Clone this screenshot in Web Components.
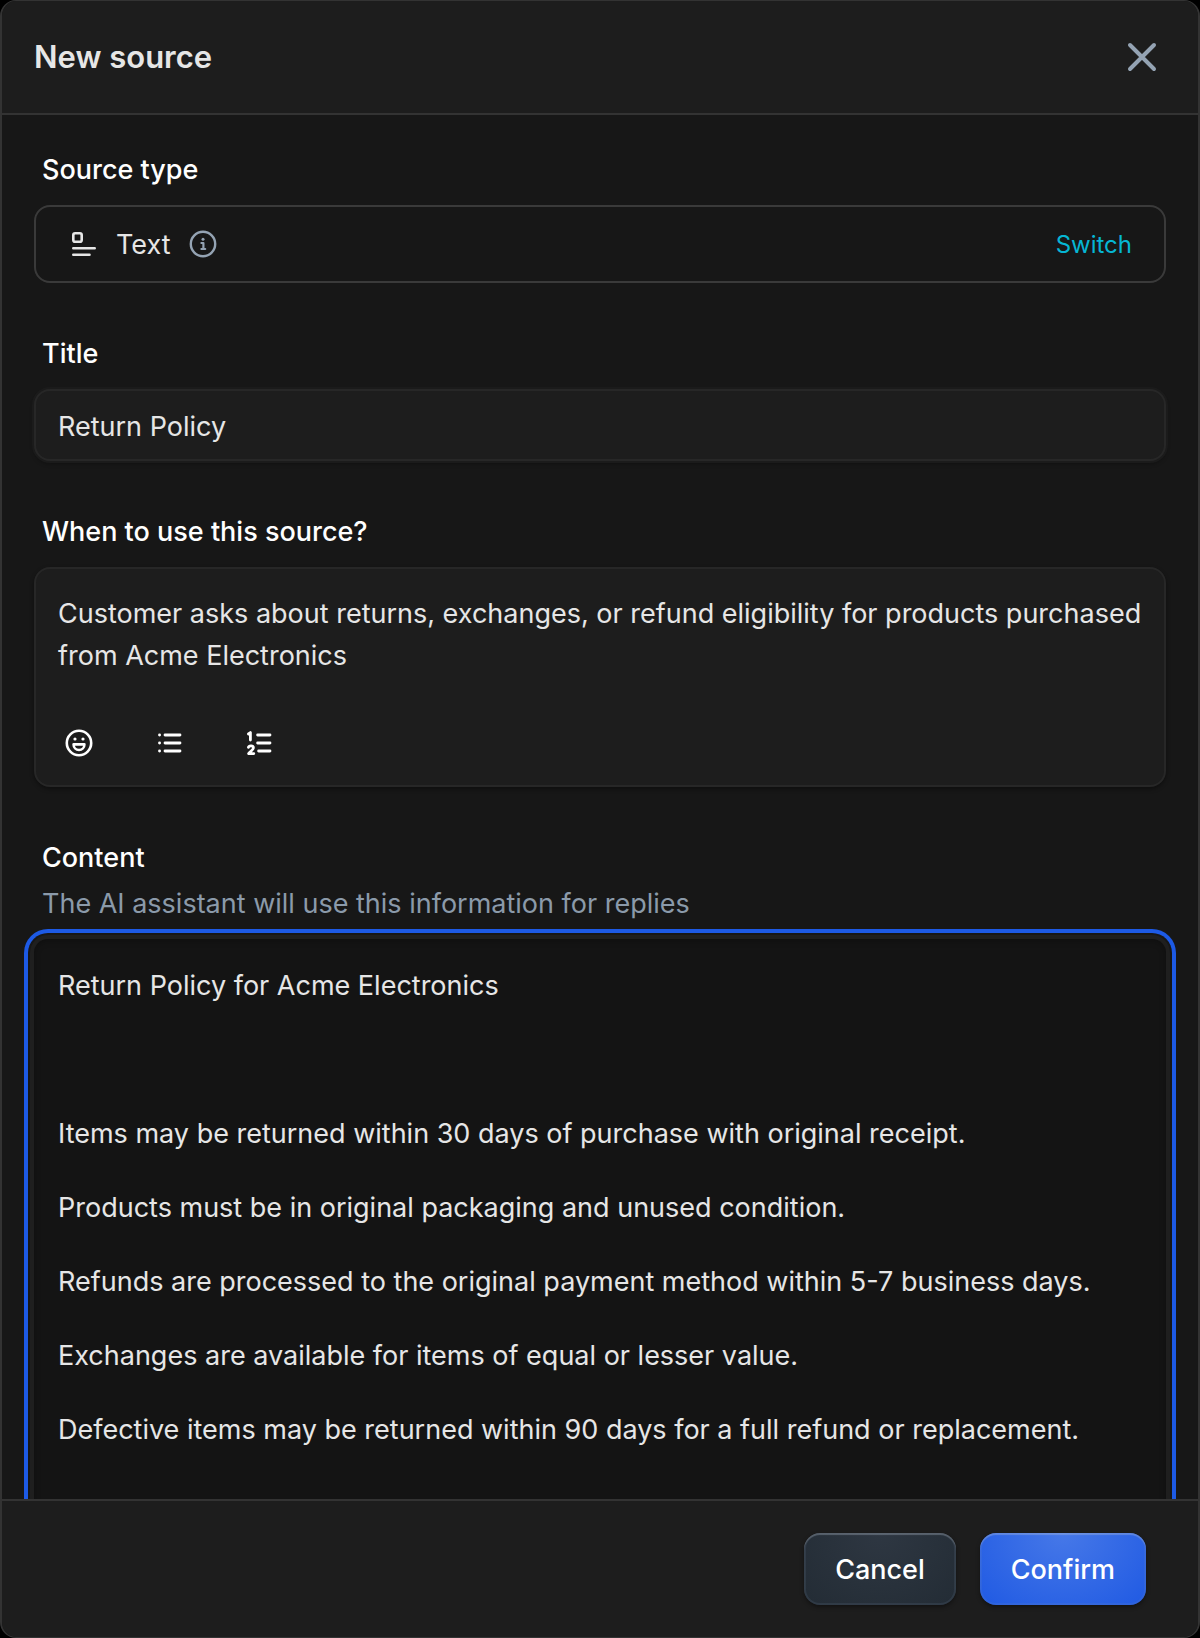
<!DOCTYPE html>
<html lang="en">
<head>
<meta charset="UTF-8">
<meta name="viewport" content="width=device-width, initial-scale=1.0">
<title>New source</title>
<style>
    body {
        margin: 0;
        background: #000;
        color: #e6e6e6;
        font-family: Inter, "Liberation Sans", sans-serif;
        font-size: 27px;
        line-height: 42px;
        font-weight: 400;
    }
</style>
</head>
<body>
<source-dialog heading="New source">
    <source-type name="Text"></source-type>
    <text-field label="Title" value="Return Policy"></text-field>
    <rich-field label="When to use this source?" rows="2">Customer asks about returns, exchanges, or refund eligibility for products purchased from Acme Electronics</rich-field>
    <content-field label="Content" hint="The AI assistant will use this information for replies">Return Policy for Acme Electronics

Items may be returned within 30 days of purchase with original receipt.
Products must be in original packaging and unused condition.
Refunds are processed to the original payment method within 5-7 business days.
Exchanges are available for items of equal or lesser value.
Defective items may be returned within 90 days for a full refund or replacement.</content-field>
    <action-button slot="actions">Cancel</action-button>
    <action-button slot="actions" variant="primary">Confirm</action-button>
</source-dialog>

<script>
// Styles shared by all the form fields
const fieldStyles = `
    * { box-sizing: border-box; }
    :host { display: block; }
    label, .label {
        display: block;
        margin: 0 8px 14px;
        color: #fff;
        font-weight: 500;
    }
    input, textarea {
        display: block;
        width: 100%;
        margin: 0;
        color: inherit;
        font: inherit;
        outline: none;
        resize: none;
    }
    button {
        margin: 0;
        padding: 0;
        border: 0;
        background: none;
        color: inherit;
        font: inherit;
        cursor: pointer;
    }
    svg { display: block; }
`;

class SourceDialog extends HTMLElement {
    constructor() {
        super();
        const shadow = this.attachShadow({ mode: 'open' });
        shadow.innerHTML = `
            <style>
                * { box-sizing: border-box; }
                :host {
                    display: flex;
                    flex-direction: column;
                    box-sizing: border-box;
                    height: 100vh;
                    overflow: hidden;
                    border: solid #333;
                    border-width: 1px 2px;
                    border-radius: 16px;
                    background: #171717;
                }
                header {
                    display: flex;
                    align-items: center;
                    justify-content: space-between;
                    height: 114px;
                    padding: 0 32px;
                    border-bottom: 2px solid #333;
                    background: #1d1d1d;
                }
                h1 {
                    margin: 0;
                    font-size: 31px;
                    font-weight: 600;
                }
                .close {
                    width: 48px;
                    height: 48px;
                    padding: 0;
                    border: 0;
                    background: none;
                    color: #94a3b3;
                    cursor: pointer;
                }
                .close svg { display: block; }
                main {
                    display: flex;
                    flex: 1;
                    flex-direction: column;
                    gap: 50px;
                    min-height: 0;
                    padding: 34px 32px;
                    overflow: auto;
                    scrollbar-width: none;
                }
                footer {
                    display: flex;
                    justify-content: flex-end;
                    gap: 24px;
                    padding: 32px 52px;
                    border-top: 2px solid #333;
                    background: #1d1d1d;
                }
            </style>
            <header>
                <h1></h1>
                <button class="close" type="button" aria-label="Close">
                    <svg width="48" height="48" viewBox="0 0 48 48" fill="none" stroke="currentColor" stroke-width="4" stroke-linecap="round">
                        <path d="M12 12 36 36M36 12 12 36"/>
                    </svg>
                </button>
            </header>
            <main><slot></slot></main>
            <footer><slot name="actions"></slot></footer>
        `;
        shadow.querySelector('h1').textContent = this.getAttribute('heading');
    }
}

class SourceType extends HTMLElement {
    constructor() {
        super();
        const shadow = this.attachShadow({ mode: 'open' });
        shadow.innerHTML = `
            <style>
                ${fieldStyles}
                .box {
                    display: flex;
                    align-items: center;
                    height: 78px;
                    padding: 2px 32px 0;
                    border: 2px solid #3a3a3a;
                    border-radius: 16px;
                }
                .icon { margin: 0 18px 0 2px; }
                .info {
                    margin-left: 18px;
                    color: #94a3b3;
                }
                .switch {
                    margin-left: auto;
                    color: #06b6d4;
                    font-size: 24px;
                }
            </style>
            <div class="label">Source type</div>
            <div class="box">
                <svg class="icon" width="28" height="28" viewBox="0 0 28 28" fill="none" stroke="currentColor" stroke-width="2.6" stroke-linecap="round">
                    <rect x="3.3" y="2.3" width="8.4" height="8.4" rx="1.8"/>
                    <path d="M3.3 17.2H24.7M3.3 23.8H19.5"/>
                </svg>
                <span class="name"></span>
                <button class="info" type="button" aria-label="About this source type">
                    <svg width="30" height="30" viewBox="0 0 30 30" fill="none" stroke="currentColor" stroke-width="2.4" stroke-linecap="round" stroke-linejoin="round">
                        <circle cx="14" cy="14" r="12.2"/>
                        <path stroke-width="2.2" d="M12.4 13H14.4V18.8M12.4 19H16.2"/>
                        <circle cx="14" cy="9.2" r="1.5" fill="currentColor" stroke="none"/>
                    </svg>
                </button>
                <button class="switch" type="button">Switch</button>
            </div>
        `;
        shadow.querySelector('.name').textContent = this.getAttribute('name');
    }
}

class TextField extends HTMLElement {
    constructor() {
        super();
        const shadow = this.attachShadow({ mode: 'open' });
        shadow.innerHTML = `
            <style>
                ${fieldStyles}
                input {
                    height: 72px;
                    padding: 2px 22px 0;
                    border: 2px solid #272727;
                    border-radius: 16px;
                    background: #1d1d1d;
                    box-shadow: 0 0 0 2px #1b1b1b, 0 3px 4px rgba(0, 0, 0, .3);
                }
            </style>
            <label for="field"></label>
            <input id="field" type="text">
        `;
        shadow.querySelector('label').textContent = this.getAttribute('label');
        shadow.querySelector('input').value = this.getAttribute('value');
    }
}

class RichField extends HTMLElement {
    constructor() {
        super();
        const shadow = this.attachShadow({ mode: 'open' });
        shadow.innerHTML = `
            <style>
                ${fieldStyles}
                .editor {
                    padding: 24px 0 18px;
                    border: 2px solid #272727;
                    border-radius: 16px;
                    background: #1d1d1d;
                    box-shadow: 0 2px 4px rgba(0, 0, 0, .4);
                }
                textarea {
                    padding: 0 22px;
                    border: 0;
                    background: none;
                    overflow: hidden;
                }
                .toolbar {
                    display: flex;
                    gap: 42px;
                    margin-top: 42px;
                    padding: 0 19px;
                    color: #fff;
                }
            </style>
            <label for="field"></label>
            <div class="editor">
                <textarea id="field"></textarea>
                <div class="toolbar">
                    <button type="button" aria-label="Emoji">
                        <svg width="48" height="48" viewBox="0 0 48 48" fill="none" stroke="currentColor" stroke-width="2.6" stroke-linejoin="round">
                            <circle cx="24" cy="24" r="12.2"/>
                            <path d="M18.6 25.4H29.4C29.4 28.6 27 31 24 31S18.6 28.6 18.6 25.4Z"/>
                            <circle cx="20" cy="20" r="1.6" fill="currentColor" stroke="none"/>
                            <circle cx="28" cy="20" r="1.6" fill="currentColor" stroke="none"/>
                        </svg>
                    </button>
                    <button type="button" aria-label="Bulleted list">
                        <svg width="48" height="48" viewBox="0 0 48 48" fill="none" stroke="currentColor" stroke-width="2.8" stroke-linecap="round">
                            <path d="M20 16H35M20 24H35M20 32H35M14.5 16H14.6M14.5 24H14.6M14.5 32H14.6"/>
                        </svg>
                    </button>
                    <button type="button" aria-label="Numbered list">
                        <svg width="48" height="48" viewBox="0 0 48 48" fill="none" stroke="currentColor" stroke-width="2.8" stroke-linecap="round" stroke-linejoin="round">
                            <path d="M22.6 16H35M22.6 24H35M23.6 32H35"/>
                            <path d="M13.4 15 15.4 13.6V21M13.4 28.4C14 26.2 18.6 26.2 18.4 29C18.3 30.8 15.6 32 13.6 34.6H18.8"/>
                        </svg>
                    </button>
                </div>
            </div>
        `;
        const area = shadow.querySelector('textarea');
        area.rows = this.getAttribute('rows');
        area.value = this.textContent;
        shadow.querySelector('label').textContent = this.getAttribute('label');
    }
}

class ContentField extends HTMLElement {
    constructor() {
        super();
        const shadow = this.attachShadow({ mode: 'open' });
        shadow.innerHTML = `
            <style>
                ${fieldStyles}
                label { margin-bottom: 4px; }
                .hint {
                    margin: 0 8px 14px;
                    color: #8b9aaa;
                }
                textarea {
                    padding: 10px 24px;
                    border: 0;
                    border-radius: 14px;
                    background: #141414;
                    line-height: 74px;
                    /* grey edge, thin gap, then the blue focus ring */
                    box-shadow: 0 0 0 4px #1f1f1f, 0 0 0 6px #171717, 0 0 0 10px #1d5ae5, inset 0 2px 6px rgba(0, 0, 0, .25);
                }
            </style>
            <label for="field"></label>
            <div class="hint" id="hint"></div>
            <textarea id="field" rows="9" aria-describedby="hint"></textarea>
        `;
        shadow.querySelector('label').textContent = this.getAttribute('label');
        shadow.querySelector('.hint').textContent = this.getAttribute('hint');
        shadow.querySelector('textarea').value = this.textContent;
    }
}

class ActionButton extends HTMLElement {
    constructor() {
        super();
        const shadow = this.attachShadow({ mode: 'open' });
        shadow.innerHTML = `
            <style>
                :host { display: block; }
                button {
                    display: block;
                    height: 72px;
                    padding: 2px 31px 0;
                    border: 0;
                    border-radius: 16px;
                    background: radial-gradient(ellipse at 50% 0, #2e3742, #232c35);
                    box-shadow: inset 0 0 0 2px rgba(120, 150, 180, .13), inset 0 2px 1px rgba(255, 255, 255, .2), 0 2px 4px rgba(0, 0, 0, .4);
                    color: #fff;
                    font: inherit;
                    font-weight: 500;
                    cursor: pointer;
                }
                :host([variant="primary"]) button {
                    background: radial-gradient(ellipse at 50% 0, #4678e8, #205ae3);
                }
            </style>
            <button type="button"><slot></slot></button>
        `;
    }
}

customElements.define('source-dialog', SourceDialog);
customElements.define('source-type', SourceType);
customElements.define('text-field', TextField);
customElements.define('rich-field', RichField);
customElements.define('content-field', ContentField);
customElements.define('action-button', ActionButton);
</script>
</body>
</html>
